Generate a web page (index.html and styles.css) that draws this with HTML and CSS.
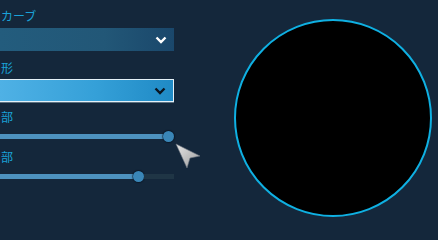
FILE: index.html
```html
<!DOCTYPE html>
<html lang="ja">
<head>
<meta charset="utf-8">
<link rel="stylesheet" href="styles.css">
</head>
<body>
<div class="page">
  <div class="panel">
    <div class="field f1">
      <div class="label">カーブ</div>
      <div class="select dark">
        <svg class="chev" width="12" height="8" viewBox="0 0 12 8"><path d="M1.5 1.5 L6 6 L10.5 1.5" fill="none" stroke="#ffffff" stroke-width="2.4"/></svg>
      </div>
    </div>
    <div class="field f2">
      <div class="label">形</div>
      <div class="select light">
        <svg class="chev" width="12" height="8" viewBox="0 0 12 8"><path d="M1.5 1.5 L6 6 L10.5 1.5" fill="none" stroke="#0b1520" stroke-width="2.4"/></svg>
      </div>
    </div>
    <div class="field f3">
      <div class="label">部</div>
      <div class="slider">
        <div class="fill" style="width:163px"></div>
        <div class="thumb"></div>
        <div class="rest"></div>
      </div>
    </div>
    <div class="field f4">
      <div class="label">部</div>
      <div class="slider">
        <div class="fill" style="width:133px"></div>
        <div class="thumb"></div>
        <div class="rest"></div>
      </div>
    </div>
    <svg class="cursor" width="28" height="28" viewBox="0 0 28 28">
      <defs>
        <linearGradient id="cg" x1="0" y1="0" x2="1" y2="1">
          <stop offset="0" stop-color="#e6e6e6"/>
          <stop offset="1" stop-color="#9a9a9a"/>
        </linearGradient>
      </defs>
      <polygon points="2,2 26,14 16,16 13,26" fill="url(#cg)" stroke="#6b7480" stroke-width="0.6"/>
    </svg>
  </div>
  <div class="viewer">
    <div class="circle"></div>
  </div>
</div>
</body>
</html>
```
FILE: styles.css
```css
html, body {
  margin: 0;
  padding: 0;
  background: #14273b;
  width: 438px;
  height: 230px;
  overflow: hidden;
}
.page {
  display: flex;
  flex-direction: row;
  font-family: "Noto Sans CJK JP", "Noto Sans", sans-serif;
}
.panel {
  position: relative;
  width: 174px;
  display: flex;
  flex-direction: column;
}
.label {
  font-size: 12px;
  line-height: 16px;
  color: #1aa2d8;
  padding-left: 1px;
}
.f1 { margin-top: 8px; }
.f1 .select { margin-top: 4px; }
.f2 { margin-top: 9px; }
.f2 .select { margin-top: 3px; }
.f3 { margin-top: 7px; }
.f3 .slider { margin-top: 6px; }
.f4 { margin-top: 7px; }
.f4 .slider { margin-top: 6px; }
.select {
  height: 23px;
  box-sizing: border-box;
  display: flex;
  align-items: center;
  justify-content: flex-end;
  padding-right: 7px;
}
.select.dark {
  background: linear-gradient(90deg, #235c7d 0%, #225777 60%, #1a476b 100%);
}
.select.light {
  background: linear-gradient(90deg, #4fb1e5 0%, #35a0d8 55%, #1f8ac5 100%);
  border: 1px solid #e4f1f8;
  border-left: none;
  box-shadow: 0 1px 0 #5d7282;
}
.chev { display: block; }
.slider {
  height: 11px;
  display: flex;
  align-items: center;
}
.fill {
  height: 5px;
  background: #4d92bf;
  flex: none;
}
.thumb {
  width: 11px;
  height: 11px;
  border-radius: 50%;
  background: #3a86b7;
  box-shadow: 0 0 1px 1px rgba(5, 15, 25, 0.55);
  flex: none;
}
.rest {
  flex: 1;
  height: 5px;
  background: #1f3545;
}
.cursor {
  position: absolute;
  left: 174px;
  top: 142px;
}
.viewer {
  padding-left: 60px;
  padding-top: 19px;
}
.circle {
  width: 198px;
  height: 198px;
  box-sizing: border-box;
  border-radius: 50%;
  background: #000000;
  border: 2px solid #0fb0e2;
}
```
